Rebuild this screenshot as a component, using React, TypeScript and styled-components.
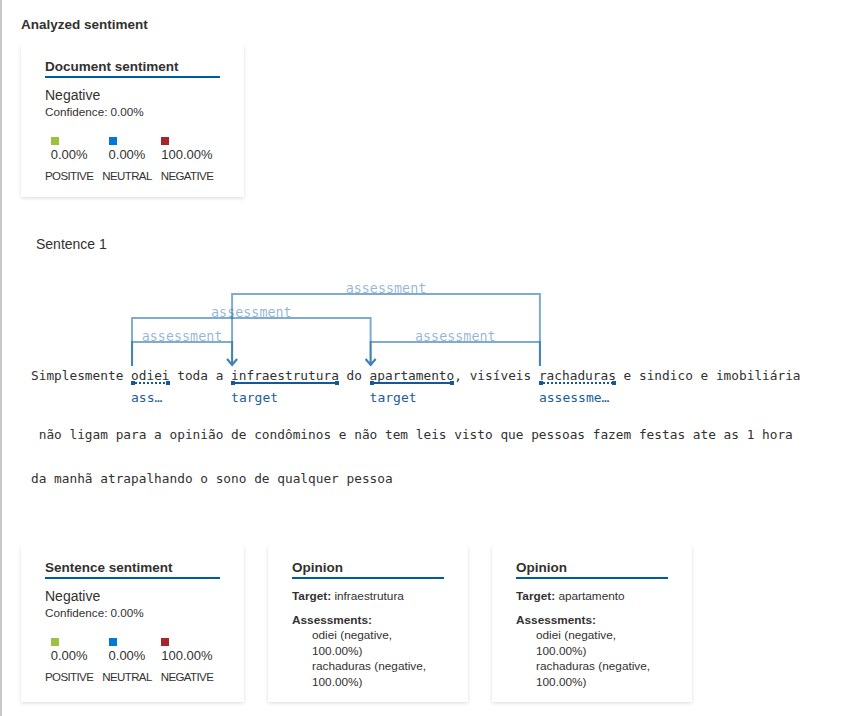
import React, { useLayoutEffect, useRef, useState } from 'react';
import styled, { createGlobalStyle } from 'styled-components';

const GlobalStyle = createGlobalStyle`
  html, body {
    margin: 0;
    padding: 0;
    background: #ffffff;
  }
  body {
    font-family: 'Liberation Sans', Arial, sans-serif;
    color: #323130;
  }
`;

const Page = styled.div`
  min-height: 716px;
  box-sizing: border-box;
  border-left: 2px solid #c8c8c8;
  padding: 15px 0 0 19px;
`;

const SectionHeading = styled.h2`
  margin: 0 0 9px;
  font-size: 13.5px;
  font-weight: 700;
  line-height: 20px;
`;

const Card = styled.div<{ $width: number }>`
  width: ${(p) => p.$width}px;
  box-sizing: border-box;
  padding: 14px 24px 11.5px;
  background: #ffffff;
  box-shadow: 0 1.6px 3.6px rgba(0, 0, 0, 0.132), 0 0.3px 0.9px rgba(0, 0, 0, 0.108);
`;

const CardTitle = styled.div`
  font-size: 13.5px;
  font-weight: 700;
  line-height: 18px;
  border-bottom: 2px solid #005a9e;
`;

const Verdict = styled.div`
  margin-top: 8px;
  font-size: 14px;
  line-height: 18px;
`;

const Confidence = styled.div`
  font-size: 11.7px;
  line-height: 15px;
`;

const ScoreGrid = styled.div`
  margin-top: 17.5px;
  display: grid;
  grid-template-columns: repeat(3, auto);
  justify-content: start;
  column-gap: 9px;
`;

const Score = styled.div`
  display: flex;
  flex-direction: column;
  align-items: center;
`;

const ScoreValue = styled.div`
  display: flex;
  flex-direction: column;
  align-items: flex-start;
`;

const Swatch = styled.span<{ $color: string }>`
  width: 8px;
  height: 8px;
  background: ${(p) => p.$color};
`;

const Percent = styled.div`
  margin-top: 1.5px;
  font-size: 13px;
  line-height: 18px;
`;

const ScoreLabel = styled.div`
  margin-top: 4px;
  margin-bottom: 1.5px;
  font-size: 11.5px;
  letter-spacing: -0.6px;
  line-height: 16px;
  text-transform: uppercase;
`;

const SentenceTitle = styled.div`
  margin-top: 37px;
  padding-left: 15px;
  font-size: 14px;
  line-height: 20px;
`;

const Annotated = styled.div`
  position: relative;
  margin-top: 22px;
  padding-left: 10px;
  font-family: 'DejaVu Sans Mono', 'Liberation Mono', monospace;
  font-size: 12.79px;
  color: #323130;
`;

const Arcs = styled.svg`
  display: block;
  width: 100%;
  height: 90px;
  overflow: visible;
`;

const TextRow = styled.div`
  line-height: 20px;
  white-space: pre;
  margin-bottom: 27px;
`;

const PlainLine = styled.div`
  line-height: 44px;
  white-space: pre;
`;

const Word = styled.span`
  position: relative;
  display: inline-block;
`;

const Mark = styled.span<{ $dotted: boolean }>`
  position: absolute;
  left: 0;
  right: 0;
  top: 15.5px;
  height: 2px;
  background: ${(p) =>
    p.$dotted
      ? 'repeating-linear-gradient(to right, #11599a 0 2px, transparent 2px 4px)'
      : '#11599a'};

  &::before,
  &::after {
    content: '';
    position: absolute;
    top: -1px;
    width: 4px;
    height: 4px;
    background: #11599a;
  }
  &::before {
    left: 0;
  }
  &::after {
    right: 0;
  }
`;

const Tag = styled.span`
  position: absolute;
  left: 0;
  top: 23.5px;
  width: 100%;
  overflow: hidden;
  text-overflow: ellipsis;
  white-space: nowrap;
  font-size: 13px;
  line-height: 16px;
  color: #1b5d9b;
`;

const CardRow = styled.div`
  margin-top: 44px;
  display: flex;
  align-items: stretch;
  gap: 24px;
`;

const Field = styled.div`
  margin-top: 9px;
  font-size: 11.8px;
  line-height: 16px;
`;

const FieldName = styled.span`
  font-weight: 700;
`;

const Assessments = styled.div`
  margin-top: 8.5px;
  font-size: 11.8px;
  line-height: 15.5px;
`;

const AssessmentList = styled.div`
  padding: 0 6px 0 20px;
`;

type Scores = { positive: string; neutral: string; negative: string };

const scoreColumns = [
  { key: 'positive' as const, label: 'Positive', color: '#9bc23e' },
  { key: 'neutral' as const, label: 'Neutral', color: '#0078d4' },
  { key: 'negative' as const, label: 'Negative', color: '#a4262c' },
];

const SentimentCard: React.FC<{ title: string; scores: Scores }> = ({ title, scores }) => (
  <Card $width={223}>
    <CardTitle>{title}</CardTitle>
    <Verdict>Negative</Verdict>
    <Confidence>Confidence: 0.00%</Confidence>
    <ScoreGrid>
      {scoreColumns.map((c) => (
        <Score key={c.key}>
          <ScoreValue>
            <Swatch $color={c.color} />
            <Percent>{scores[c.key]}</Percent>
          </ScoreValue>
          <ScoreLabel>{c.label}</ScoreLabel>
        </Score>
      ))}
    </ScoreGrid>
  </Card>
);

const OpinionCard: React.FC<{ target: string }> = ({ target }) => (
  <Card $width={200}>
    <CardTitle>Opinion</CardTitle>
    <Field>
      <FieldName>Target:</FieldName> {target}
    </Field>
    <Assessments>
      <FieldName>Assessments:</FieldName>
      <AssessmentList>
        <div>odiei (negative, 100.00%)</div>
        <div>rachaduras (negative, 100.00%)</div>
      </AssessmentList>
    </Assessments>
  </Card>
);

type Segment = string | { id: string; text: string; kind: 'target' | 'assessment' };

const firstLine: Segment[] = [
  'Simplesmente ',
  { id: 'odiei', text: 'odiei', kind: 'assessment' },
  ' toda a ',
  { id: 'infra', text: 'infraestrutura', kind: 'target' },
  ' do ',
  { id: 'apto', text: 'apartamento', kind: 'target' },
  ', visíveis ',
  { id: 'rach', text: 'rachaduras', kind: 'assessment' },
  ' e sindico e imobiliária',
];

// y of each arc's horizontal run inside the arcs drawing
const relations = [
  { from: 'odiei', to: 'infra', y: 66 },
  { from: 'rach', to: 'apto', y: 66 },
  { from: 'odiei', to: 'apto', y: 42 },
  { from: 'rach', to: 'infra', y: 18 },
];

const ARC_COLOR = '#005a9e';

const AnnotatedSentence: React.FC = () => {
  const svgRef = useRef<SVGSVGElement | null>(null);
  const wordRefs = useRef<Record<string, HTMLSpanElement | null>>({});
  const [xs, setXs] = useState<Record<string, number>>({});

  useLayoutEffect(() => {
    const svg = svgRef.current;
    if (!svg) return;
    const left = svg.getBoundingClientRect().left;
    const next: Record<string, number> = {};
    Object.entries(wordRefs.current).forEach(([id, el]) => {
      if (el) next[id] = el.getBoundingClientRect().left - left + 1;
    });
    setXs(next);
  }, []);

  return (
    <Annotated>
      <Arcs ref={svgRef}>
        {relations.map((r) => {
          const x1 = xs[r.from];
          const x2 = xs[r.to];
          if (x1 === undefined || x2 === undefined) return null;
          return (
            <g key={`${r.from}-${r.to}`}>
              <path
                d={`M${x1} 90 V${r.y} H${x2} V89 M${x2 - 5} 83 L${x2} 89 L${x2 + 5} 83`}
                fill="none"
                stroke={ARC_COLOR}
                strokeOpacity={0.5}
                strokeWidth={2}
              />
              <text
                x={(x1 + x2) / 2}
                y={r.y - 1.5}
                textAnchor="middle"
                fontFamily="'DejaVu Sans Mono', monospace"
                fontSize={13.4}
                fill={ARC_COLOR}
                fillOpacity={0.44}
              >
                assessment
              </text>
            </g>
          );
        })}
      </Arcs>
      <TextRow>
        {firstLine.map((seg, i) =>
          typeof seg === 'string' ? (
            <React.Fragment key={i}>{seg}</React.Fragment>
          ) : (
            <Word
              key={seg.id}
              ref={(el) => {
                wordRefs.current[seg.id] = el;
              }}
            >
              {seg.text}
              <Mark $dotted={seg.kind === 'assessment'} />
              <Tag>{seg.kind}</Tag>
            </Word>
          ),
        )}
      </TextRow>
      <PlainLine>
        {' não ligam para a opinião de condôminos e não tem leis visto que pessoas fazem festas ate as 1 hora'}
      </PlainLine>
      <PlainLine>da manhã atrapalhando o sono de qualquer pessoa</PlainLine>
    </Annotated>
  );
};

const allNegative: Scores = { positive: '0.00%', neutral: '0.00%', negative: '100.00%' };

const App: React.FC = () => (
  <>
    <GlobalStyle />
    <Page>
      <SectionHeading>Analyzed sentiment</SectionHeading>
      <SentimentCard title="Document sentiment" scores={allNegative} />
      <SentenceTitle>Sentence 1</SentenceTitle>
      <AnnotatedSentence />
      <CardRow>
        <SentimentCard title="Sentence sentiment" scores={allNegative} />
        <OpinionCard target="infraestrutura" />
        <OpinionCard target="apartamento" />
      </CardRow>
    </Page>
  </>
);

export default App;
